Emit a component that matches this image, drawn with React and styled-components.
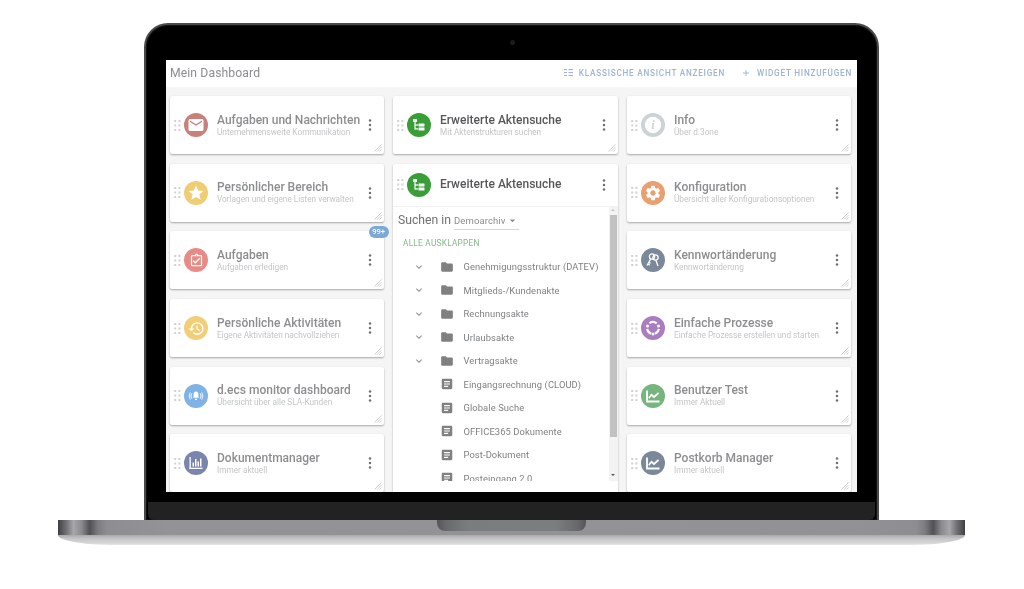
import React from "react";
import styled, { createGlobalStyle } from "styled-components";
import {
  MdEmail, MdStar, MdOutlineAssignmentTurnedIn, MdHistory, MdSettings,
  MdFolder, MdArticle, MdExpandMore, MdAdd, MdArrowDropDown,
} from "react-icons/md";

const Global = createGlobalStyle`
  html, body { margin: 0; padding: 0; background: #fff; overflow: hidden; }
  * { box-sizing: border-box; }
  body { font-family: Roboto, "Liberation Sans", sans-serif; }
`;

const Page = styled.div`
  width: 1024px; height: 589px; padding-top: 23px;
  display: flex; flex-direction: column; align-items: center;
  background: #fff;
`;
const Lid = styled.div`
  width: 735px; height: 497px; margin-left: -1px;
  display: flex; flex-direction: column;
  background: #000; border: 2px solid #4a4a4c; border-bottom: 0;
  border-radius: 24px 24px 0 0;
  box-shadow: inset 0 0 0 1px #111;
`;
const TopBezel = styled.div`
  height: 34.5px; flex: none; display: flex; justify-content: center; align-items: center; padding-left: 1px;
`;
const Camera = styled.span`
  width: 5px; height: 5px; border-radius: 50%; background: #1a1c22;
`;
const Screen = styled.div`
  flex: none; height: 432.5px; margin: 0 20px 0 20px;
  display: flex; flex-direction: column; overflow: hidden;
  background: #f5f5f5; filter: blur(0.45px);
`;
const Chin = styled.div`
  flex: 1; margin: 10px 2px 0; background: #222223; border-radius: 0 0 6px 6px;
`;
const Header = styled.div`
  height: 27px; flex: none; background: #fff;
  display: flex; align-items: center; padding: 0 5px 1px 4px;
`;
const HeaderTitle = styled.div`
  flex: 1; font-size: 12.2px; color: #8a8d90; letter-spacing: 0.1px;
`;
const HeaderLink = styled.div`
  display: flex; align-items: center; gap: 6px; margin-left: 16px;
  color: #9db4d2; font-size: 8.2px; font-weight: 500; letter-spacing: 0.76px; text-transform: uppercase;
`;
const Grid = styled.div`
  flex: 1; min-height: 0; display: grid; grid-template-columns: 214px 225px 224px; gap: 9px;
  padding: 9.5px 0 0 4px;
`;
const Column = styled.div`
  display: flex; flex-direction: column; gap: 9.7px;
`;
const Card = styled.div`
  position: relative; flex: none; height: ${p => p.$tall ? "340px" : "58px"};
  background: #fff; border-radius: 2px; box-shadow: 0 1px 2px rgba(0,0,0,.32);
  display: flex; flex-direction: column;
`;
const CardHead = styled.div`
  height: ${p => p.$tall ? "43px" : "58px"}; flex: none; display: flex; align-items: center; padding: 0 12.5px 0 4px;
  ${p => p.$tall ? "border-bottom: 1px solid #f1f1f1;" : ""}
`;
const Grip = styled.svg`
  width: 7px; height: 11px; flex: none; color: #cfd2d2;
`;
const Circle = styled.div`
  width: 24px; height: 24px; border-radius: 50%; flex: none; margin-left: 3px;
  background: ${p => p.$c}; color: #fff;
  display: flex; align-items: center; justify-content: center;
`;
const Texts = styled.div`
  flex: 1; min-width: 0; margin-left: 9px; display: flex; flex-direction: column; padding-bottom: 1px;
`;
const Title = styled.div`
  font-size: 12px; font-weight: 500; line-height: 14px; letter-spacing: 0; white-space: nowrap;
  color: ${p => p.$dark ? "#555759" : "#8b8d8f"};
`;
const Sub = styled.div`
  font-size: 8.25px; line-height: 10px; color: #c3c5c6; white-space: nowrap;
`;
const Kebab = styled.svg`
  width: 4px; height: 12px; flex: none; color: #6f7173;
`;
const Handle = styled.svg`
  position: absolute; right: 2px; bottom: 2px; width: 8px; height: 8px; color: #b9bbbb;
`;
const Badge = styled.div`
  position: absolute; top: -5.5px; right: -4.5px; height: 12px; padding: 0 3.5px; border-radius: 6px;
  background: #7da8d8; color: #fff; font-size: 7.6px; font-weight: 500; line-height: 12px;
`;
const TallBody = styled.div`
  flex: none; height: 274px; display: flex;
`;
const ScrollPane = styled.div`
  flex: 1; min-width: 0; overflow: hidden; padding: 6px 0 0 5px;
`;
const SearchRow = styled.div`
  display: flex; align-items: center; height: 14px; margin-bottom: 9px;
`;
const SearchLabel = styled.div`
  font-size: 12.2px; color: #6f7173; width: 56px;
`;
const Select = styled.div`
  width: 65px; height: 18px; margin-top: 3px; border-bottom: 1px solid #d5d6d6;
  display: flex; align-items: center; justify-content: space-between; padding-right: 0;
  font-size: 9.5px; color: #8a8c8e; letter-spacing: 0.1px;
`;
const Expand = styled.div`
  margin: 0 0 0 5px; height: 14px; line-height: 14px; font-size: 8.2px;
  color: #82b885; letter-spacing: 0.3px; text-transform: uppercase;
`;
const Tree = styled.div`
  margin-top: 5.5px;
`;
const TreeRow = styled.div`
  height: 23.5px; display: flex; align-items: center; color: #808284;
`;
const ChevronSlot = styled.div`
  width: 42px; padding-left: 15px; flex: none; display: flex; align-items: center; color: #8e9092;
`;
const IconSlot = styled.div`
  width: 23.5px; flex: none; display: flex; align-items: center; color: #7f8082;
`;
const TreeText = styled.div`
  font-size: 9.35px; letter-spacing: 0.1px; color: #7d7f81; white-space: nowrap;
`;
const Scrollbar = styled.div`
  width: 9px; flex: none; background: #f3f3f3;
  display: flex; flex-direction: column; justify-content: space-between;
`;
const ThumbWrap = styled.div`
  flex: 1; padding: 2px 1px 0 0; display: flex; flex-direction: column; align-items: center;
`;
const ArrowUpSlot = styled.div`
  height: 3px; flex: none; padding-top: 0;
`;
const Thumb = styled.div`
  width: 7px; height: 222px; margin-top: 3.5px; background: #c1c1c1; flex: none;
`;
const ArrowDownSlot = styled.div`
  height: 9px; flex: none; padding: 2px 1px 0 0; display: flex; justify-content: center;
`;
const Arrow = styled.div`
  width: 0; height: 0; flex: none; border-left: 2px solid transparent; border-right: 2px solid transparent;
  ${p => p.$up ? "border-bottom: 2.5px solid #c4c4c4;" : "border-top: 2.5px solid #555;"}
`;
const Base = styled.div`
  width: 907px; height: 25px; flex: none; margin-right: 1px; display: flex; flex-direction: column;
`;
const BaseBar = styled.div`
  height: 15px; flex: none; display: flex; justify-content: center;
  background: linear-gradient(90deg, #3f3f42 0, #55555a 0.4%, #75757a 1%, #a6a6ab 1.7%, #8a8a8f 2.6%, #515155 3.5%, #7c7c80 4.4%, #8e8e92 5.4%, #939397 12%, #929296 88%, #8e8e92 94.6%, #7c7c80 95.6%, #515155 96.5%, #8a8a8f 97.4%, #a6a6ab 98.3%, #75757a 99%, #55555a 99.6%, #3f3f42 100%);
`;
const Notch = styled.div`
  width: 149px; height: 11px; border-radius: 0 0 8px 8px;
  background: linear-gradient(90deg, #55565a 0, #67696c 6%, #7a7d7e 20%, #7b7e7f 80%, #67696c 94%, #55565a 100%);
`;
const BaseLip = styled.div`
  height: 10px; flex: none; border-radius: 0 0 55px 55px / 0 0 10px 10px;
  background: linear-gradient(180deg, #a9a9ab 0, #c4c4c5 35%, #d6d6d8 80%, #e6e6e8 100%);
`;

const GripIcon = () => (
  <Grip viewBox="0 0 7 11" fill="currentColor">
    {[1, 5.5, 10].flatMap(y => [1.2, 5.4].map(x => <rect key={x + "-" + y} x={x - 1} y={y - 1} width="2" height="2" />))}
  </Grip>
);
const KebabIcon = () => (
  <Kebab viewBox="0 0 4 12" fill="currentColor">
    <circle cx="2" cy="1.6" r="1.25" /><circle cx="2" cy="6" r="1.25" /><circle cx="2" cy="10.4" r="1.25" />
  </Kebab>
);
const HandleIcon = () => (
  <Handle viewBox="0 0 8 8" stroke="currentColor" strokeWidth="0.7" fill="none">
    <path d="M0.5 7.5 L7.5 0.5 M3 7.5 L7.5 3 M5.5 7.5 L7.5 5.5" />
  </Handle>
);
const TreeGlyph = () => (
  <svg width="16" height="16" viewBox="0 0 16 16" fill="currentColor">
    <rect x="2" y="2" width="4" height="3" rx=".4" />
    <rect x="3.4" y="5" width="1.2" height="7.5" />
    <rect x="4" y="7.4" width="3" height="1.2" />
    <rect x="4" y="11.3" width="3" height="1.2" />
    <rect x="7.5" y="6.5" width="6" height="3" rx=".4" />
    <rect x="7.5" y="10.4" width="6" height="3" rx=".4" />
  </svg>
);
const InfoGlyph = () => (
  <svg width="24" height="24" viewBox="0 0 24 24">
    <circle cx="12" cy="12" r="8.2" fill="#fff" />
    <text x="12" y="16.2" textAnchor="middle" fontSize="12" fontStyle="italic" fontFamily="Liberation Serif, serif" fontWeight="700" fill="#ccd3d4">i</text>
  </svg>
);
const BellWaves = () => (
  <svg width="16" height="16" viewBox="0 0 16 16" fill="none" stroke="#fff" strokeWidth=".9">
    <path d="M8 3.4c-1.7 0-2.4 1.3-2.4 2.9v2.5l-.8 1h6.4l-.8-1V6.3c0-1.6-.7-2.9-2.4-2.9z" fill="#fff" stroke="none" />
    <rect x="7" y="10.8" width="2" height="1.2" fill="#fff" stroke="none" />
    <path d="M3.7 5.5a5 5 0 0 0 0 5M2.2 4.5a7 7 0 0 0 0 7M12.3 5.5a5 5 0 0 1 0 5M13.8 4.5a7 7 0 0 1 0 7" />
  </svg>
);
const BarsGlyph = () => (
  <svg width="16" height="16" viewBox="0 0 16 16" fill="#fff">
    <rect x="1.5" y="2" width="1.3" height="12" />
    <rect x="1.5" y="12.7" width="13" height="1.3" />
    <rect x="4.5" y="7.5" width="1.5" height="4" />
    <rect x="7" y="4" width="1.5" height="7.5" />
    <rect x="9.5" y="6.5" width="1.5" height="5" />
    <rect x="12" y="3.5" width="1.5" height="8" />
  </svg>
);
const LineGlyph = () => (
  <svg width="16" height="16" viewBox="0 0 16 16" fill="none" stroke="#fff" strokeWidth="1.8">
    <path d="M2 2.5V13.5H14.5" />
    <path d="M3.8 10.2L6.5 6.8L9 9L13.6 4.8" />
  </svg>
);
const CycleGlyph = () => (
  <svg width="18" height="18" viewBox="0 0 18 18" fill="none" stroke="#fff" strokeWidth="2.2">
    <path d="M5.5 4.2A6 6 0 0 1 12.7 4.4M14.8 9.8A6 6 0 0 1 11 14.6M7 14.6A6 6 0 0 1 3.2 9.8" />
    <circle cx="14.5" cy="7" r="1.5" fill="#fff" stroke="none" />
    <circle cx="9" cy="15" r="1.5" fill="#fff" stroke="none" />
    <circle cx="3.5" cy="7" r="1.5" fill="#fff" stroke="none" />
  </svg>
);
const KeysGlyph = () => (
  <svg width="18" height="18" viewBox="0 0 18 18" fill="none" stroke="#fff" strokeWidth="1.3">
    <circle cx="8" cy="5.5" r="2.6" />
    <circle cx="11.5" cy="6.5" r="2.6" />
    <path d="M6.8 7.8L3 14.5M3.8 13L5.8 14.3M4.8 11.3L6.5 12.4" />
    <path d="M11.8 9.100L14 15" />
  </svg>
);
const ListGlyph = () => (
  <svg width="9" height="7" viewBox="0 0 9 7" fill="#9db4d2">
    {[0, 3, 6].flatMap(y => [
      <rect key={"a" + y} x="0" y={y} width="3" height="1.1" />,
      <rect key={"b" + y} x="4.5" y={y} width="4.5" height="1.1" />,
    ])}
  </svg>
);

const left = [
  { t: "Aufgaben und Nachrichten", s: "Unternehmensweite Kommunikation", c: "#c97f7a", i: <MdEmail size={18} /> },
  { t: "Persönlicher Bereich", s: "Vorlagen und eigene Listen verwalten", c: "#f0cd74", i: <MdStar size={18} /> },
  { t: "Aufgaben", s: "Aufgaben erledigen", c: "#e98a85", i: <MdOutlineAssignmentTurnedIn size={15} />, badge: "99+" },
  { t: "Persönliche Aktivitäten", s: "Eigene Aktivitäten nachvollziehen", c: "#f0cf78", i: <MdHistory size={17} /> },
  { t: "d.ecs monitor dashboard", s: "Übersicht über alle SLA-Kunden", c: "#7fb2e5", i: <BellWaves /> },
  { t: "Dokumentmanager", s: "Immer aktuell", c: "#7a85ad", i: <BarsGlyph /> },
];
const right = [
  { t: "Info", s: "Über d.3one", c: "#ccd3d4", i: <InfoGlyph /> },
  { t: "Konfiguration", s: "Übersicht aller Konfigurationsoptionen", c: "#e8a070", i: <MdSettings size={18} /> },
  { t: "Kennwortänderung", s: "Kennwortänderung", c: "#7a8899", i: <KeysGlyph /> },
  { t: "Einfache Prozesse", s: "Einfache Prozesse erstellen und starten", c: "#a87ec0", i: <CycleGlyph /> },
  { t: "Benutzer Test", s: "Immer Aktuell", c: "#78b47e", i: <LineGlyph /> },
  { t: "Postkorb Manager", s: "Immer aktuell", c: "#7a8899", i: <LineGlyph /> },
];
const folders = ["Genehmigungsstruktur (DATEV)", "Mitglieds-/Kundenakte", "Rechnungsakte", "Urlaubsakte", "Vertragsakte"];
const docs = ["Eingangsrechnung (CLOUD)", "Globale Suche", "OFFICE365 Dokumente", "Post-Dokument", "Posteingang 2.0"];

function Widget({ t, s, c, i, badge, dark }) {
  return (
    <Card>
      <CardHead>
        <GripIcon />
        <Circle $c={c}>{i}</Circle>
        <Texts>
          <Title $dark={dark}>{t}</Title>
          <Sub>{s}</Sub>
        </Texts>
        <KebabIcon />
      </CardHead>
      {badge && <Badge>{badge}</Badge>}
      <HandleIcon />
    </Card>
  );
}

export default function App() {
  return (
    <Page>
      <Global />
      <Lid>
        <TopBezel><Camera /></TopBezel>
        <Screen>
          <Header>
            <HeaderTitle>Mein Dashboard</HeaderTitle>
            <HeaderLink><ListGlyph />Klassische Ansicht anzeigen</HeaderLink>
            <HeaderLink><MdAdd size={10} />Widget hinzufügen</HeaderLink>
          </Header>
          <Grid>
            <Column>{left.map(w => <Widget key={w.t} {...w} />)}</Column>
            <Column>
              <Widget dark t="Erweiterte Aktensuche" s="Mit Aktenstrukturen suchen" c="#3a9e38" i={<TreeGlyph />} />
              <Card $tall>
                <CardHead $tall>
                  <GripIcon />
                  <Circle $c="#3a9e38"><TreeGlyph /></Circle>
                  <Texts><Title $dark>Erweiterte Aktensuche</Title></Texts>
                  <KebabIcon />
                </CardHead>
                <TallBody>
                  <ScrollPane>
                    <SearchRow>
                      <SearchLabel>Suchen in</SearchLabel>
                      <Select>Demoarchiv<MdArrowDropDown size={13} /></Select>
                    </SearchRow>
                    <Expand>Alle ausklappen</Expand>
                    <Tree>
                      {folders.map(f => (
                        <TreeRow key={f}>
                          <ChevronSlot><MdExpandMore size={12} /></ChevronSlot>
                          <IconSlot><MdFolder size={14} /></IconSlot>
                          <TreeText>{f}</TreeText>
                        </TreeRow>
                      ))}
                      {docs.map(d => (
                        <TreeRow key={d}>
                          <ChevronSlot />
                          <IconSlot><MdArticle size={14} /></IconSlot>
                          <TreeText>{d}</TreeText>
                        </TreeRow>
                      ))}
                    </Tree>
                  </ScrollPane>
                  <Scrollbar>
                    <ThumbWrap>
                      <ArrowUpSlot><Arrow $up /></ArrowUpSlot>
                      <Thumb />
                    </ThumbWrap>
                    <ArrowDownSlot><Arrow /></ArrowDownSlot>
                  </Scrollbar>
                </TallBody>
                <HandleIcon />
              </Card>
            </Column>
            <Column>{right.map(w => <Widget key={w.t} {...w} />)}</Column>
          </Grid>
        </Screen>
        <Chin />
      </Lid>
      <Base>
        <BaseBar><Notch /></BaseBar>
        <BaseLip />
      </Base>
    </Page>
  );
}
